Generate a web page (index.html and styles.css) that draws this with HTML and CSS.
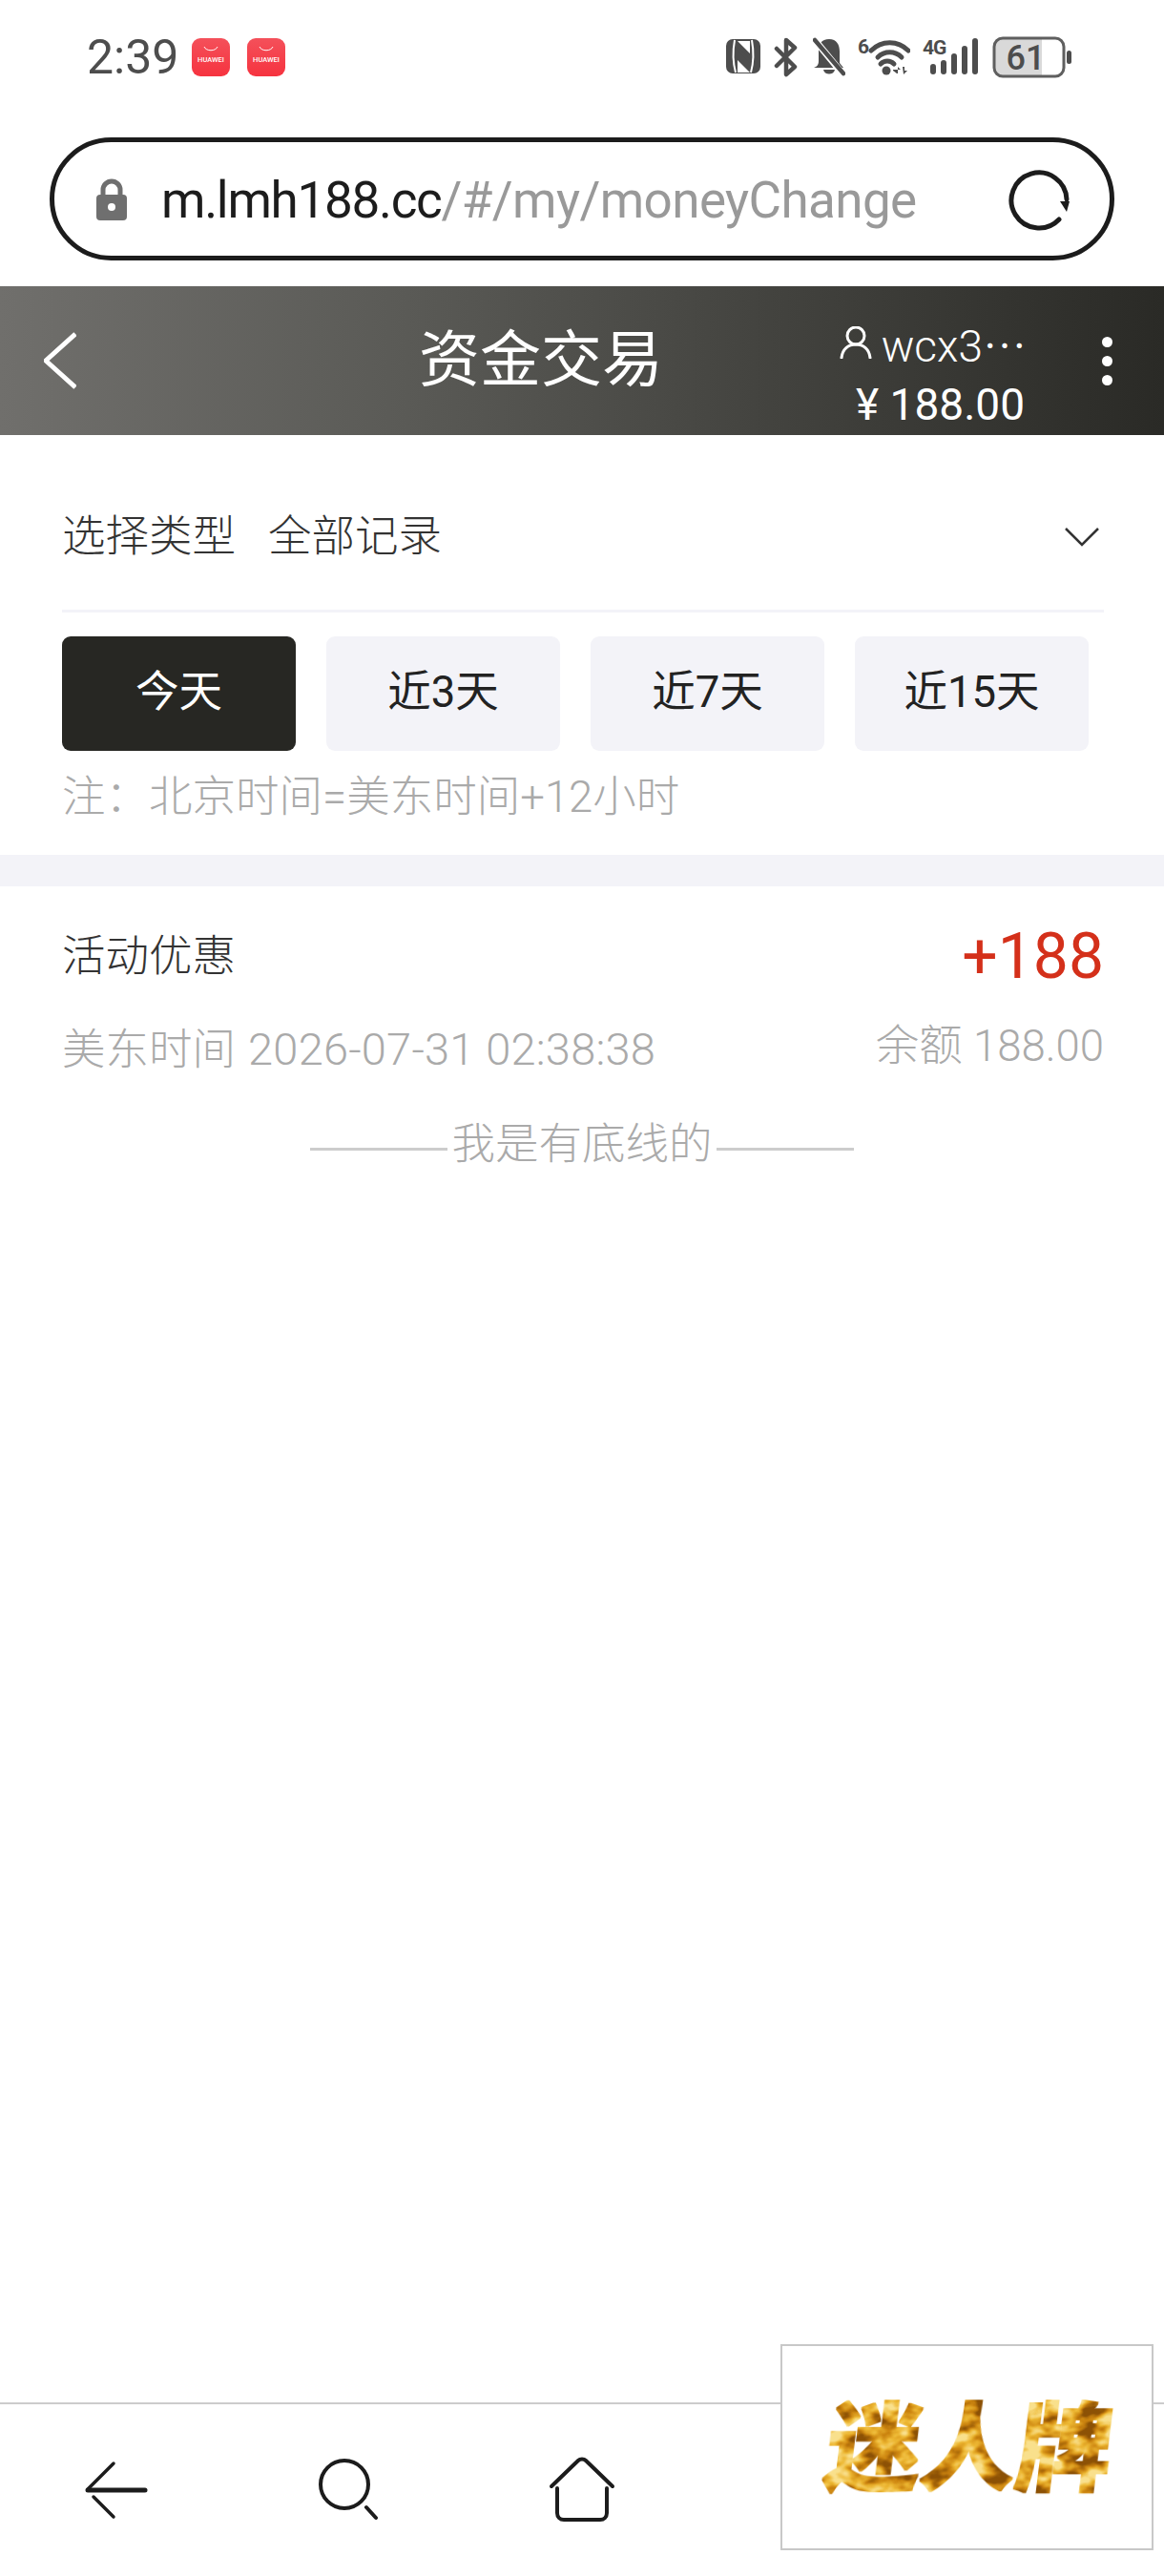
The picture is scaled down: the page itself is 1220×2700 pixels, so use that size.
FILE: index.html
```html
<!DOCTYPE html>
<html lang="zh">
<head>
	<meta charset="utf-8" />
	<title>资金交易</title>
	<link rel="stylesheet" href="styles.css">
</head>
<body>
	<div class="status">
		<div class="status-left">
			<span class="time">2:39</span>
			<svg class="hw" width="40" height="40" viewBox="0 0 40 40"><defs><linearGradient id="red" x1="0" y1="0" x2="0" y2="1"><stop offset="0" stop-color="#f4505a"/><stop offset="1" stop-color="#f6333f"/></linearGradient></defs><rect width="40" height="40" rx="9" fill="url(#red)"/><path d="M13 9c2 5 12 5 14 0" fill="none" stroke="#fff" stroke-width="1"/><text x="20" y="25" class="hw-text" text-anchor="middle">HUAWEI</text></svg>
			<svg class="hw" width="40" height="40" viewBox="0 0 40 40"><rect width="40" height="40" rx="9" fill="url(#red)"/><path d="M13 9c2 5 12 5 14 0" fill="none" stroke="#fff" stroke-width="1"/><text x="20" y="25" class="hw-text" text-anchor="middle">HUAWEI</text></svg>
		</div>
		<div class="status-right">
			<svg width="37" height="44" viewBox="0 0 37 44"><rect y="3" width="36" height="36" rx="7" fill="#4d4d4d"/><path d="M9 4C7 15 7 27 10 38M27 4c2 11 2 23-1 34" fill="none" stroke="#fff" stroke-width="2"/><path d="M12 5h13v13L12 5zM12 25l13 13H12V25z" fill="#fff"/><path d="M11 12l15 15" stroke="#4d4d4d" stroke-width="3"/></svg>
			<svg width="28" height="44" viewBox="0 0 28 44"><path d="M3 13l19 19-9 8V4l9 8-19 19" fill="none" stroke="#4d4d4d" stroke-width="4.5" stroke-linecap="round" stroke-linejoin="round"/></svg>
			<svg width="34" height="44" viewBox="0 0 34 44"><path d="M17 3c8 0 11 6 11 13v12l4 5H1c3-1 5-3 5-7V15c0-7 3-12 11-12z" fill="#4d4d4d"/><path d="M11 35h12c-1 6-11 6-12 0z" fill="#4d4d4d"/><path d="M-2 -1L30 38" stroke="#fff" stroke-width="7"/><path d="M2 4l30 35" stroke="#4d4d4d" stroke-width="4.5" stroke-linecap="round"/></svg>
			<svg width="55" height="44" viewBox="0 0 55 44"><text x="0" y="18" class="mini">6</text><g fill="none" stroke="#4d4d4d" stroke-width="5" stroke-linecap="round"><path d="M14 15c11-11 28-11 39 0"/><path d="M21 22c7-7 18-7 25 0"/><path d="M24 29c4-4 10-4 14 0"/></g><circle cx="30" cy="36" r="4.5" fill="#4d4d4d"/><path d="M42 32v7h-1l-4-3v-1h8M47 32h2v4h3l-4 4z" fill="#4d4d4d"/></svg>
			<svg width="60" height="44" viewBox="0 0 60 44"><text x="0" y="19" class="mini">4G</text><g stroke="#4d4d4d" stroke-width="6" stroke-linecap="round"><path d="M11 32v5M22 28v9M33 21v16M44 13v24M55 5v32"/></g></svg>
			<svg width="83" height="44" viewBox="0 0 83 44"><path d="M9 2h43v40H9c-4 0-7-3-7-7V9c0-4 3-7 7-7z" fill="#d9d9d9"/><rect x="2" y="2" width="73" height="40" rx="9" fill="none" stroke="#5f5f5f" stroke-width="3"/><text x="35" y="35" class="batt" text-anchor="middle">61</text><rect x="78" y="15" width="5" height="14" rx="2.5" fill="#4d4d4d"/></svg>
		</div>
	</div>

	<div class="urlbar">
		<svg class="lock" width="32" height="44" viewBox="0 0 32 44"><path d="M7 18v-6a9 9 0 0 1 18 0v6" fill="none" stroke="#6f6f6f" stroke-width="5"/><rect y="17" width="32" height="27" rx="4" fill="#6f6f6f"/><circle cx="16" cy="30" r="4" fill="#fff"/></svg>
		<span class="url"><span class="host">m.lmh188.cc</span>/#/my/moneyChange</span>
		<svg class="reload" width="66" height="66" viewBox="0 0 66 66"><path d="M54 54A29 29 0 1 1 62 33" fill="none" stroke="#1c1c1c" stroke-width="5" stroke-linecap="round"/><path d="M55 35h10l-3 11z" fill="#1c1c1c"/></svg>
	</div>

	<div class="topbar">
		<svg class="back" width="34" height="60" viewBox="0 0 34 60"><path d="M33 2L2 30l31 28" fill="none" stroke="#fff" stroke-width="5"/></svg>
		<div class="title">资金交易</div>
		<div class="acct">
			<div class="acct-name">
				<svg width="34" height="34" viewBox="0 0 34 34"><circle cx="17" cy="10" r="9" fill="none" stroke="#fff" stroke-width="3"/><path d="M2 33c1-9 7-14 15-14s14 5 15 14" fill="none" stroke="#fff" stroke-width="3" stroke-linecap="round"/></svg>
				<span>wcx3⋯</span>
			</div>
			<div class="acct-money">¥ 188.00</div>
		</div>
		<div class="menu"><i></i><i></i><i></i></div>
	</div>

	<div class="filter">
		<div class="filter-row">
			<span class="filter-label">选择类型</span>
			<span>全部记录</span>
			<svg class="caret" width="36" height="20" viewBox="0 0 36 20"><path d="M1 1l17 17L35 1" fill="none" stroke="#333" stroke-width="2.5"/></svg>
		</div>
		<div class="days">
			<div class="day day-on">今天</div>
			<div class="day">近3天</div>
			<div class="day">近7天</div>
			<div class="day">近15天</div>
		</div>
		<div class="note">注：北京时间=美东时间+12小时</div>
	</div>

	<div class="band"></div>

	<div class="record">
		<div class="record-top">
			<span class="record-name">活动优惠</span>
			<span class="amount">+188</span>
		</div>
		<div class="record-sub">
			<span class="record-time">美东时间 <span class="date">2026-07-31 02:38:38</span></span>
			<span>余额 188.00</span>
		</div>
	</div>

	<div class="baseline"><i></i><span>我是有底线的</span><i></i></div>

	<div class="nav">
		<svg width="66" height="70" viewBox="0 0 66 70"><g fill="none" stroke="#1c1c1c" stroke-linecap="round"><path d="M30 7L3 34" stroke-width="3.5"/><path d="M3 35h60" stroke-width="5"/><path d="M9 42l21 21" stroke-width="3.5"/></g></svg>
		<svg width="62" height="70" viewBox="0 0 62 70"><g fill="none" stroke="#1c1c1c" stroke-width="4" stroke-linecap="round"><circle cx="27" cy="29" r="25"/><path d="M50 53l10 11"/></g></svg>
		<svg width="70" height="70" viewBox="0 0 70 70"><g fill="none" stroke="#1c1c1c" stroke-width="4" stroke-linecap="round"><path d="M3 31L31 4c2-2 6-2 8 0l28 27"/><path d="M9 33v26c0 4 3 7 7 7h38c4 0 7-3 7-7V33"/></g></svg>
	</div>

	<div class="brand"><span class="brand-text">迷人牌</span></div>

	<svg class="defs" width="0" height="0">
		<filter id="gold" x="-5%" y="-5%" width="110%" height="110%" color-interpolation-filters="sRGB">
			<feMorphology in="SourceAlpha" operator="dilate" radius="1.2" result="fat"/>
			<feTurbulence type="fractalNoise" baseFrequency="0.035 0.055" numOctaves="3" seed="7"/>
			<feColorMatrix type="matrix" values="2.6 0 0 0 -0.8  2.6 0 0 0 -0.8  2.6 0 0 0 -0.8  0 0 0 0 1"/>
			<feComponentTransfer>
				<feFuncR type="table" tableValues="0.55 0.8 0.93 0.98"/>
				<feFuncG type="table" tableValues="0.32 0.52 0.72 0.88"/>
				<feFuncB type="table" tableValues="0.02 0.06 0.2 0.55"/>
			</feComponentTransfer>
			<feComposite in2="fat" operator="in"/>
		</filter>
	</svg>
</body>
</html>
```

FILE: styles.css
```css
* {
	box-sizing: border-box;
}
body {
	position: relative;
	display: flex;
	flex-direction: column;
	width: 1220px;
	height: 2700px;
	margin: 0;
	background: #fff;
	color: #333;
	font-family: Roboto, "Noto Sans CJK SC", sans-serif;
	font-size: 45.5px;
	font-weight: 300;
	overflow: hidden;
}
.defs {
	position: absolute;
}

.status {
	display: flex;
	align-items: center;
	justify-content: space-between;
	height: 120px;
	padding: 0 97px 0 91px;
}
.status-left {
	display: flex;
	align-items: center;
}
.time {
	width: 110px;
	color: #4d4d4d;
	font-size: 50px;
	font-weight: 400;
}
.hw {
	margin-right: 18px;
}
.hw-text {
	fill: #fff;
	font-size: 7.5px;
	font-weight: 500;
}
.status-right {
	display: flex;
	align-items: center;
	gap: 13px;
}
.mini {
	fill: #4d4d4d;
	font-size: 21px;
	font-weight: 700;
	letter-spacing: -1px;
}
.batt {
	fill: #4d4d4d;
	font-size: 36px;
	font-weight: 500;
}

.urlbar {
	display: flex;
	align-items: center;
	height: 129px;
	margin: 24px 52px 0;
	padding: 0 41px 0 44px;
	border: 5px solid #1c1c1c;
	border-radius: 65px;
}
.lock {
	margin-right: 36px;
}
.url {
	padding-top: 3px;
	color: #999;
	font-size: 53px;
	font-weight: 400;
	letter-spacing: -0.6px;
}
.host {
	color: #1c1c1c;
	letter-spacing: -1.3px;
}
.reload {
	margin-left: auto;
}

.topbar {
	display: grid;
	grid-template-columns: 439px auto 1fr 147px;
	align-items: center;
	height: 156px;
	margin-top: 27px;
	background: linear-gradient(90deg, #706f6c, #5a5a56 35%, #2a2a26);
	color: #fff;
}
.back {
	margin-left: 46px;
}
.title {
	font-size: 64px;
	font-weight: 400;
	line-height: 70px;
}
.acct {
	display: flex;
	flex-direction: column;
	align-items: flex-end;
	margin-top: 27px;
}
.acct-name {
	display: flex;
	align-items: center;
	gap: 10px;
	height: 50px;
	margin-right: -3px;
	font-size: 46px;
}
.acct-money {
	margin-top: 15px;
	margin-right: -1px;
	font-size: 46px;
	font-weight: 400;
	line-height: 50px;
}
.menu {
	display: flex;
	flex-direction: column;
	align-items: center;
	gap: 9px;
	width: 11px;
	margin-left: 82px;
}
.menu i {
	width: 11px;
	height: 11px;
	border-radius: 50%;
	background: #fff;
}

.filter {
	padding: 0 63px 0 65px;
}
.filter-row {
	display: flex;
	align-items: center;
	padding: 77px 0 46px;
	border-bottom: 3px solid #f3f3f8;
	line-height: 60px;
}
.filter-label {
	margin-right: 34px;
}
.caret {
	margin-left: auto;
	margin-right: 5px;
}
.days {
	display: grid;
	grid-template-columns: repeat(4, 245px);
	gap: 32px;
	margin-top: 25px;
}
.day {
	height: 120px;
	border-radius: 9px;
	background: #f3f3f8;
	color: #222;
	font-weight: 400;
	line-height: 117px;
	text-align: center;
}
.day-on {
	background: #272723;
	color: #fff;
}
.note {
	margin: 19px 0 30px;
	color: #aaa;
	line-height: 60px;
}

.band {
	height: 33px;
	background: #f3f3f8;
}

.record {
	padding: 33px 63px 0 65px;
}
.record-top {
	display: flex;
	align-items: center;
	justify-content: space-between;
	height: 80px;
}
.record-name {
	margin-bottom: 8px;
}
.amount {
	color: #d4301a;
	font-size: 66px;
	font-weight: 400;
}
.record-sub {
	display: flex;
	justify-content: space-between;
	margin-top: 25px;
	color: #aaa;
	line-height: 60px;
}
.record-time {
	padding-top: 3px;
}
.date {
	margin-left: 2px;
	font-size: 47px;
	letter-spacing: 0.2px;
}

.baseline {
	display: flex;
	align-items: center;
	justify-content: center;
	gap: 4px;
	margin-top: 39px;
	color: #aaa;
	line-height: 60px;
}
.baseline i {
	width: 144px;
	height: 3px;
	margin-top: 8px;
	background: #ccc;
}

.nav {
	display: flex;
	align-items: center;
	gap: 179px;
	height: 182px;
	margin-top: auto;
	padding-left: 89px;
	border-top: 2px solid #ccc;
}

.brand {
	position: absolute;
	right: 11px;
	bottom: 27px;
	display: flex;
	align-items: center;
	justify-content: center;
	width: 391px;
	height: 216px;
	padding: 6px 0 0 4px;
	border: 2px solid #c8c8c8;
	background: #fff;
}
.brand-text {
	display: block;
	color: #000;
	font-size: 100px;
	font-weight: 900;
	line-height: 110px;
	transform: skewX(-7deg);
	filter: url(#gold);
}
```
